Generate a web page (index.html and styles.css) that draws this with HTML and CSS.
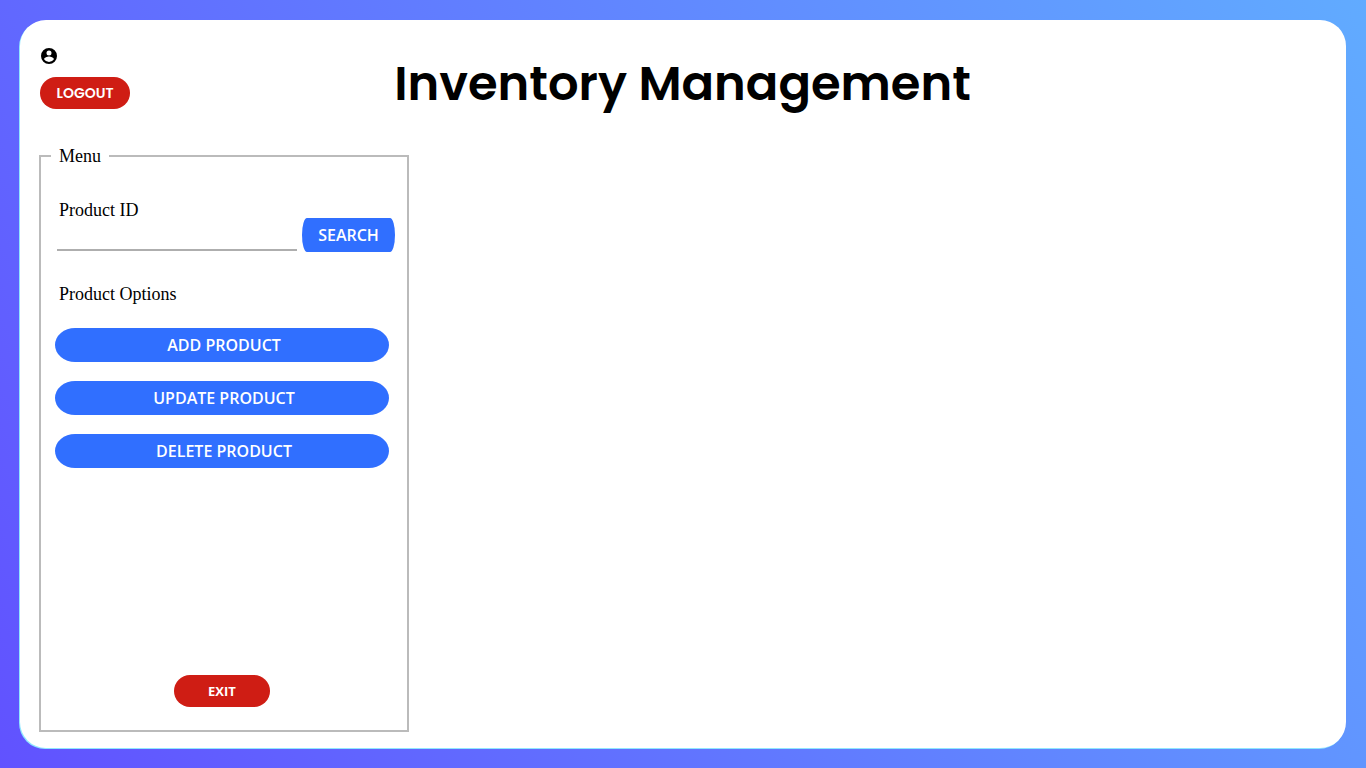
FILE: index.html
```html
<!DOCTYPE html>
<html lang="en">
<head>
<meta charset="utf-8">
<meta name="viewport" content="width=device-width, initial-scale=1">
<title>Inventory Management</title>
<link rel="stylesheet" href="styles.css">
</head>
<body>
<main class="card">
  <header class="header">
    <div class="account">
      <svg class="account-icon" viewBox="0 0 24 24" role="img" aria-label="Account">
        <path fill-rule="evenodd" d="M12 2.400a9.600 9.600 0 1 0 0 19.200 9.600 9.600 0 0 0 0-19.200zm0 2.900a3 3 0 1 1 0 6 3 3 0 0 1 0-6zm0 13.900a7 7 0 0 1-5.900-3.220c.03-1.990 3.900-3.280 5.900-3.280s5.870 1.290 5.900 3.280a7 7 0 0 1-5.900 3.220z"/>
      </svg>
      <button class="button button-red logout" type="button">LOGOUT</button>
    </div>
    <h1 class="title">Inventory Management</h1>
  </header>
  <fieldset class="menu">
    <legend class="menu-legend">Menu</legend>
    <div class="menu-body">
      <form class="search-row">
        <div class="field">
          <label class="field-label" for="product-id">Product ID</label>
          <input class="field-input" id="product-id" type="text">
        </div>
        <button class="button button-blue search" type="button">SEARCH</button>
      </form>
      <h2 class="options-title">Product Options</h2>
      <div class="options">
        <button class="button button-blue option" type="button">ADD PRODUCT</button>
        <button class="button button-blue option" type="button">UPDATE PRODUCT</button>
        <button class="button button-blue option" type="button">DELETE PRODUCT</button>
      </div>
      <div class="menu-footer">
        <button class="button button-red exit" type="button">EXIT</button>
      </div>
    </div>
  </fieldset>
</main>
</body>
</html>
```
FILE: styles.css
```css
* { box-sizing: border-box; }

body {
  margin: 0;
  min-height: 100vh;
  padding: 20px;
  display: flex;
  background: linear-gradient(60deg, #6152ff, #61abff);
  font-family: "Liberation Serif", "Times New Roman", serif;
  font-size: 18px;
  line-height: 20px;
  color: #000;
}

.card {
  flex: 1;
  display: flex;
  flex-direction: column;
  padding: 20px 20px 16px 19px;
  background: #fff;
  border-radius: 26px;
  box-shadow: -1px 1px 0 #8fe6ff;
}

.header {
  display: grid;
  grid-template-columns: 1fr auto 1fr;
  min-height: 105px;
}

.account {
  display: flex;
  flex-direction: column;
  align-items: flex-start;
  gap: 11px;
  padding-top: 6px;
}

.account-icon {
  width: 20px;
  height: 20px;
}

.title {
  margin: 14px 0 0;
  font: 600 48px/60px Poppins, Inter, sans-serif;
}

.button {
  border: 0;
  padding: 0;
  color: #fff;
  cursor: pointer;
}

.button-red {
  height: 32px;
  border-radius: 16px;
  background: #cf1d14;
}

.button-blue {
  height: 34px;
  background: #306fff;
  font: 600 16px/20px "Open Sans", "Noto Sans", sans-serif;
}

.logout {
  width: 90px;
  margin-left: 1px;
  font: 600 14px/20px Poppins, Inter, sans-serif;
}

.menu {
  flex: 1;
  display: flex;
  flex-direction: column;
  width: 370px;
  max-width: 100%;
  margin: 0;
  padding: 0 10px;
  border: 2px solid #bbb;
}

.menu-legend {
  padding: 0 8px;
  line-height: 22px;
}

.menu-body {
  flex: 1;
  display: flex;
  flex-direction: column;
  padding: 33px 2px 23px 4px;
}

.search-row {
  display: flex;
  align-items: flex-end;
  gap: 5px;
  padding-left: 2px;
}

.field {
  flex: 1;
  min-width: 0;
  display: flex;
  flex-direction: column;
  padding-bottom: 1px;
}

.field-label { padding-left: 2px; }

.field-input {
  width: 100%;
  height: 31px;
  padding: 4px 2px;
  border: 0;
  border-bottom: 2px solid #aeaeae;
  outline: 0;
  background: transparent;
  font: inherit;
}

.search {
  width: 93px;
  border-radius: 5px / 17px;
}

.options-title {
  margin: 32px 0 24px;
  padding-left: 4px;
  font: inherit;
}

.options {
  display: flex;
  flex-direction: column;
  gap: 19px;
  padding-right: 6px;
}

.option {
  padding-left: 4px;
  border-radius: 20px / 17px;
}

.menu-footer {
  display: flex;
  justify-content: center;
  margin-top: auto;
  padding-right: 6px;
}

.exit {
  width: 96px;
  font: 700 13px/20px "Open Sans", "Noto Sans", sans-serif;
}
```
